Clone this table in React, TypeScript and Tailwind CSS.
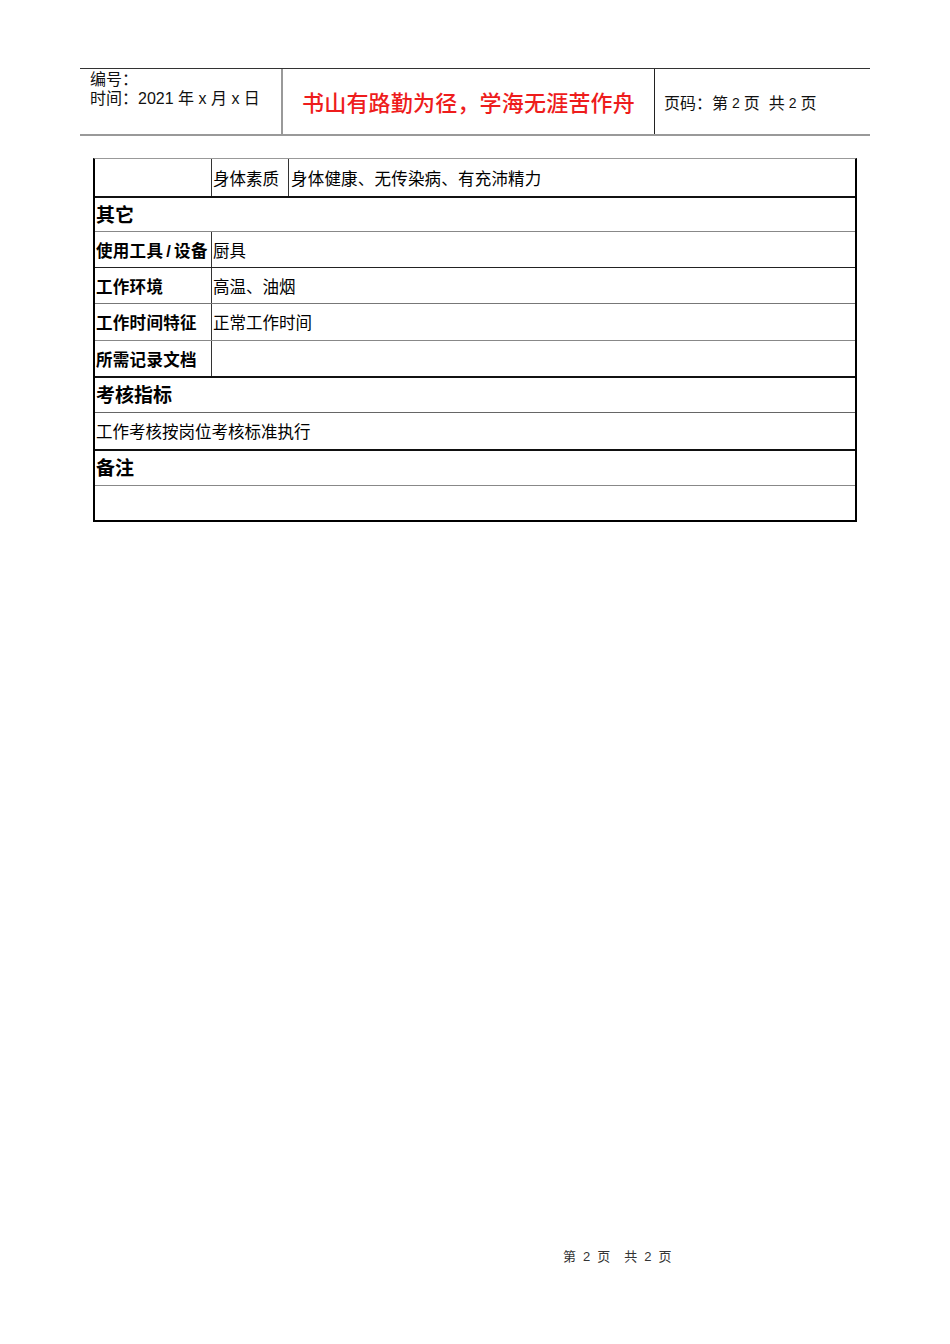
const font = "font-['Liberation_Sans','Noto_Sans_CJK_SC',sans-serif]";

interface Row {
  label: string;
  value?: string;
  h: string;
  border: string;
}

const ROWS: Row[] = [
  { label: '使用工具/设备', value: '厨具', h: 'h-[36px]', border: 'border-b border-[#222]' },
  { label: '工作环境', value: '高温、油烟', h: 'h-[36px]', border: 'border-b border-[#777]' },
  { label: '工作时间特征', value: '正常工作时间', h: 'h-[37px]', border: 'border-b border-[#888]' },
  { label: '所需记录文档', value: '', h: 'h-[37px]', border: 'border-b-2 border-[#111]' },
];

function SectionTitle({ text, h, border }: { text: string; h: string; border: string }) {
  return (
    <div className={`${h} ${border} flex items-center pl-[1px] pt-[3px] text-[19px] font-bold text-black`}>
      {text}
    </div>
  );
}

export default function App() {
  return (
    <div className={`${font} bg-white w-[950px] h-[1344px] text-black`}>
      {/* page header */}
      <div className="pt-[68px] pl-[80px]">
        <div className="w-[790px] h-[68px] flex border-t border-[#333] border-b-2 border-b-[#999]">
          <div className="w-[201px] pl-[10px] pt-[1px] text-[16px] leading-[19px] text-[#111]">
            <div>编号：</div>
            <div>时间：2021 年 x 月 x 日</div>
          </div>
          <div className="w-[2px] bg-[#999]" />
          <div className="w-[371px] pt-[4px] flex items-center justify-center text-[22px] font-medium text-[#ee1c1c] tracking-[0.2px]">
            书山有路勤为径，学海无涯苦作舟
          </div>
          <div className="w-[1px] bg-[#222]" />
          <div className="flex-1 flex items-center pt-[4px] pl-[9px] text-[16px] text-[#111]">
            页码：第<span className="text-[14px] mx-[4px]">2</span>页&nbsp;&nbsp;共<span className="text-[14px] mx-[4px]">2</span>页
          </div>
        </div>
      </div>

      {/* job description table */}
      <div className="mt-[22px] ml-[93px] w-[764px] border-t border-t-[#999] border-l-2 border-r-2 border-b-2 border-black text-[16.5px]">
        <div className="h-[39px] flex border-b-2 border-[#111]">
          <div className="w-[117px] border-r border-[#333]" />
          <div className="w-[77px] border-r border-[#333] flex items-center pt-[3px] pl-[1px]">身体素质</div>
          <div className="flex-1 flex items-center pt-[3px] pl-[2px] tracking-[0.2px]">身体健康、无传染病、有充沛精力</div>
        </div>

        <SectionTitle text="其它" h="h-[34px]" border="border-b border-[#888]" />

        {ROWS.map((row) => (
          <div key={row.label} className={`${row.h} ${row.border} flex`}>
            <div className="w-[117px] border-r border-[#333] flex items-center pt-[3px] pl-[1px] font-bold whitespace-nowrap tracking-[0.3px]">
              {row.label.includes('/') ? (
                <>
                  使用工具<span className="mx-[3px]">/</span>设备
                </>
              ) : (
                row.label
              )}
            </div>
            <div className="flex-1 flex items-center pt-[3px] pl-[1px]">{row.value}</div>
          </div>
        ))}

        <SectionTitle text="考核指标" h="h-[35px]" border="border-b border-[#666]" />

        <div className="h-[38px] border-b-2 border-[#111] flex items-center pt-[3px] pl-[1px]">
          工作考核按岗位考核标准执行
        </div>

        <SectionTitle text="备注" h="h-[35px]" border="border-b border-[#888]" />

        <div className="h-[34px]" />
      </div>

      {/* page footer */}
      <div className="mt-[725px] pl-[563px] flex gap-[7px] text-[13px] text-[#333]">
        <span>第</span>
        <span>2</span>
        <span>页</span>
        <span className="ml-[7px]">共</span>
        <span>2</span>
        <span>页</span>
      </div>
    </div>
  );
}
